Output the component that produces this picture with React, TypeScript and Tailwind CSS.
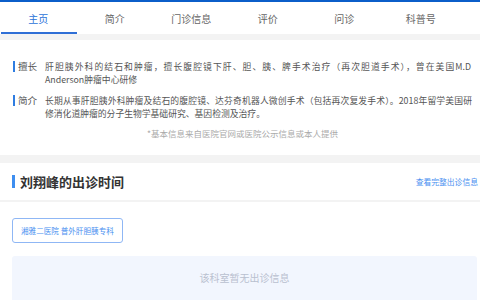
import React from "react";

const tabs = ["主页", "简介", "门诊信息", "评价", "问诊", "科普号"];

export default function App() {
  return (
    <div
      className="w-[480px] h-[300px] overflow-hidden bg-[#f3f3f3]"
      style={{ fontFamily: '"Noto Sans CJK SC", "Noto Sans", sans-serif' }}
    >
      <div className="h-[2px] bg-[#0b5ec9]" />
      <div className="flex h-[32px] bg-white">
        {tabs.map((t, i) => (
          <div
            key={t}
            className={
              i === 0
                ? "relative flex w-[76.5px] items-center justify-center text-[10px] text-[#2b73d9]"
                : "relative flex w-[76.5px] items-center justify-center text-[10px] text-[#666]"
            }
          >
            {t}
            {i === 0 && <div className="absolute bottom-0 left-[1px] right-0 h-[2px] bg-[#2f6fd6]" />}
          </div>
        ))}
      </div>

      <div className="mt-[6px] bg-white pl-[13px] pr-[8px] pt-[20px] pb-[15px]">
        <div className="flex leading-[13px]">
          <div className="flex shrink-0 items-start">
            <div className="mt-[1px] h-[11px] w-[2px] bg-[#2f7de1]" />
            <span className="ml-[3px] w-[27px] text-[9.6px] text-[#555]">擅长</span>
          </div>
          <p className="min-w-0 flex-1 text-[8.8px] text-[#555]">
            <span className="block pr-[1px] [text-align-last:justify]">
              肝胆胰外科的结石和肿瘤，擅长腹腔镜下肝、胆、胰、脾手术治疗（再次胆道手术），曾在美国M.D
            </span>
            <span className="block">Anderson肿瘤中心研修</span>
          </p>
        </div>
        <div className="mt-[7.5px] flex leading-[13px]">
          <div className="flex shrink-0 items-start">
            <div className="mt-[1px] h-[11px] w-[2px] bg-[#2f7de1]" />
            <span className="ml-[3px] w-[27px] text-[9.6px] text-[#555]">简介</span>
          </div>
          <p className="min-w-0 flex-1 text-justify text-[8.8px] text-[#555]">
            长期从事肝胆胰外科肿瘤及结石的腹腔镜、达芬奇机器人微创手术（包括再次复发手术）。2018年留学美国研修消化道肿瘤的分子生物学基础研究、基因检测及治疗。
          </p>
        </div>
        <p className="mt-[6.5px] text-center text-[8.5px] leading-[14px] text-[#aaa]">
          *基本信息来自医院官网或医院公示信息或本人提供
        </p>
      </div>

      <div className="mt-[8px] flex h-[37px] items-center justify-between bg-white pl-[12px] pr-[2px]">
        <div className="flex items-center">
          <div className="h-[13px] w-[3px] bg-[#3d8ef0]" />
          <span className="ml-[5px] text-[13px] font-bold text-[#333]">刘翔峰的出诊时间</span>
        </div>
        <span className="text-[7.8px] text-[#4a8ff0]">查看完整出诊信息</span>
      </div>

      <div className="mt-[2px] h-[120px] bg-white pl-[12px] pr-[3px] pt-[16px]">
        <div className="flex h-[25px] w-fit items-center rounded-[3px] border border-[#8fb7f5] px-[8px] text-[7.6px] text-[#4a8ff0]">
          湘雅二医院 普外肝胆胰专科
        </div>
        <div className="mt-[13px] flex h-[60px] items-start justify-center rounded-[3px] bg-[#f2f6fe] pt-[15px] text-[10px] leading-[14px] text-[#b9c0cf]">
          该科室暂无出诊信息
        </div>
      </div>
    </div>
  );
}
